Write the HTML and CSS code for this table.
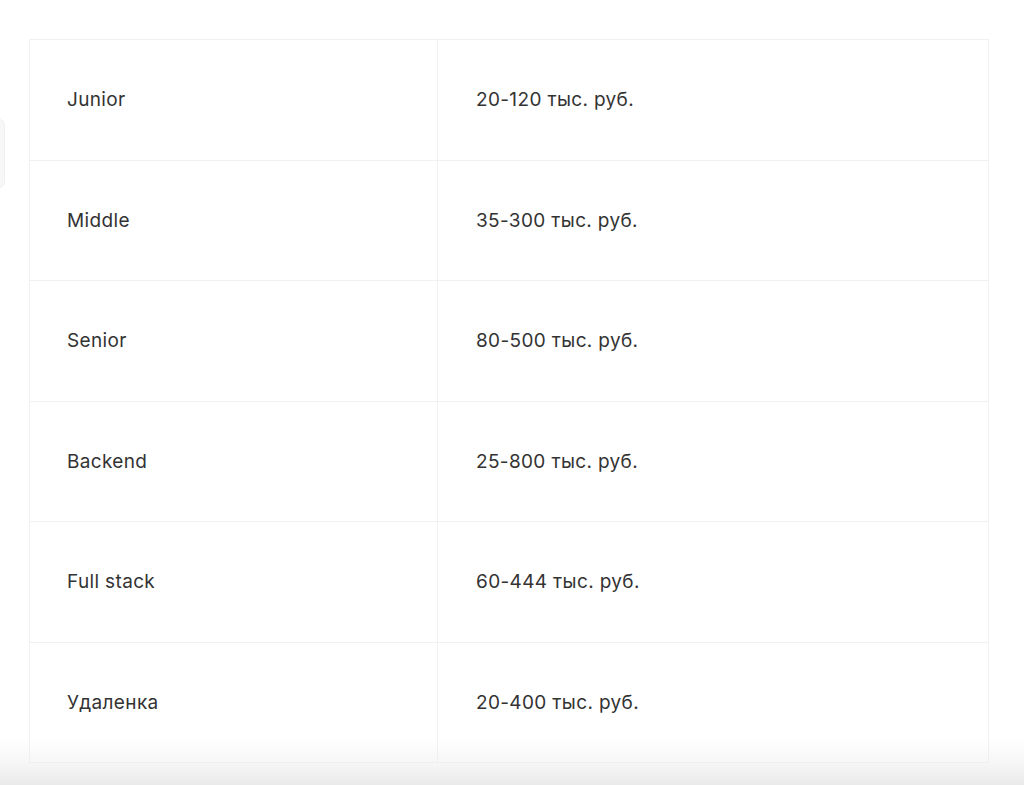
FILE: index.html
```html
<!DOCTYPE html>
<html lang="ru">
<head>
<meta charset="utf-8">
<link rel="stylesheet" href="styles.css">
</head>
<body>
<div class="side-tab"></div>
<main class="page">
  <table class="salary">
    <tbody>
      <tr><td>Junior</td><td>20-120 тыс. руб.</td></tr>
      <tr><td>Middle</td><td>35-300 тыс. руб.</td></tr>
      <tr><td>Senior</td><td>80-500 тыс. руб.</td></tr>
      <tr><td>Backend</td><td>25-800 тыс. руб.</td></tr>
      <tr><td>Full stack</td><td>60-444 тыс. руб.</td></tr>
      <tr><td>Удаленка</td><td>20-400 тыс. руб.</td></tr>
    </tbody>
  </table>
</main>
<div class="fade"></div>
</body>
</html>
```
FILE: styles.css
```css
html, body {
  margin: 0;
  padding: 0;
  background: #ffffff;
}
body {
  font-family: Inter, "Noto Sans", sans-serif;
  color: #333333;
  height: 785px;
  overflow: hidden;
}
.page {
  padding: 39px 35px 0 29px;
}
.salary {
  width: 960px;
  border-collapse: collapse;
  table-layout: fixed;
}
.salary td {
  border: 1px solid #f1f1f1;
  height: 120.5px;
  padding: 1px 0 0 37px;
  font-size: 19px;
  letter-spacing: 0.35px;
  line-height: 24px;
  vertical-align: middle;
  box-sizing: border-box;
}
.salary td:first-child {
  width: 408px;
}
.salary td:last-child {
  padding-left: 38px;
}
.side-tab {
  position: absolute;
  left: -10px;
  top: 119px;
  width: 15px;
  height: 69px;
  background: #f7f7f7;
  border: 1px solid #f0f0f0;
  border-radius: 6px;
  box-sizing: border-box;
}
.fade {
  position: fixed;
  left: 0;
  right: 0;
  bottom: 0;
  height: 48px;
  background: linear-gradient(to bottom, rgba(236,236,236,0) 0%, rgba(236,236,236,0.45) 55%, rgba(234,234,234,1) 100%);
  pointer-events: none;
}
```
